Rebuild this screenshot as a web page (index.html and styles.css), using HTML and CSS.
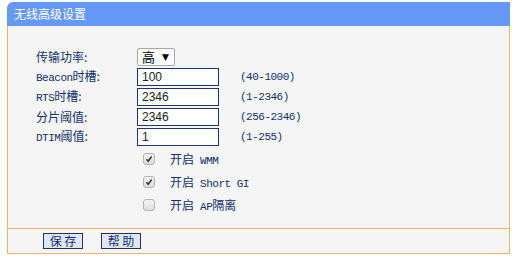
FILE: index.html
```html
<!DOCTYPE html>
<html>
<head>
<meta charset="utf-8">
<link rel="stylesheet" href="styles.css">
</head>
<body>
<div class="panel">
  <div class="title">无线高级设置</div>
  <div class="content">
    <div class="form">
      <div class="label">传输功率:</div>
      <div class="field"><span class="select"><span class="sel-val">高</span><span class="arrow">▼</span></span></div>
      <div class="hint"></div>

      <div class="label"><span class="en">Beacon</span>时槽:</div>
      <div class="field"><span class="input">100</span></div>
      <div class="hint">(40-1000)</div>

      <div class="label"><span class="en">RTS</span>时槽:</div>
      <div class="field"><span class="input">2346</span></div>
      <div class="hint">(1-2346)</div>

      <div class="label">分片阈值:</div>
      <div class="field"><span class="input">2346</span></div>
      <div class="hint">(256-2346)</div>

      <div class="label"><span class="en">DTIM</span>阈值:</div>
      <div class="field"><span class="input">1</span></div>
      <div class="hint">(1-255)</div>
    </div>
    <div class="checks">
      <div class="check-row"><span class="cb checked"><svg viewBox="0 0 12 12" width="12" height="12"><path d="M3 6.2 L5 8.6 L9.2 3" fill="none" stroke="#333" stroke-width="1.8"/></svg></span><span class="cb-label">开启<span class="en"> WMM</span></span></div>
      <div class="check-row"><span class="cb checked"><svg viewBox="0 0 12 12" width="12" height="12"><path d="M3 6.2 L5 8.6 L9.2 3" fill="none" stroke="#333" stroke-width="1.8"/></svg></span><span class="cb-label">开启<span class="en"> Short GI</span></span></div>
      <div class="check-row"><span class="cb"></span><span class="cb-label">开启<span class="en"> AP</span>隔离</span></div>
    </div>
  </div>
  <div class="buttons">
    <span class="btn">保 存</span>
    <span class="btn">帮 助</span>
  </div>
</div>
</body>
</html>
```

FILE: styles.css
```css
html, body {
  margin: 0;
  padding: 0;
  background: #ffffff;
}
body {
  padding: 2px 2px 0 7px;
  font-family: "Noto Sans CJK SC", "Liberation Sans", sans-serif;
  font-size: 12px;
  color: #13306b;
}
.panel {
  width: 503px;
}
.title {
  height: 24px;
  line-height: 24px;
  background: #6699f5;
  color: #ffffff;
  font-size: 12px;
  padding-left: 7px;
  border-top-left-radius: 6px;
}
.content {
  background: #f5f5f5;
  border-left: 1px solid #eeb46e;
  border-right: 1px solid #eeb46e;
  border-bottom: 1px solid #eeb46e;
  padding: 21px 0 12px 28px;
  height: 169px;
}
.form {
  display: grid;
  grid-template-columns: 101px 103px auto;
  grid-auto-rows: 20px;
  align-items: center;
}
.label {
  font-size: 12px;
  line-height: 20px;
  white-space: nowrap;
  color: #13306b;
}
.en {
  font-family: "Liberation Mono", "DejaVu Sans Mono", monospace;
  font-size: 11px;
  letter-spacing: -0.5px;
  white-space: pre;
}
.field {
  display: flex;
  align-items: center;
}
.select {
  display: flex;
  align-items: center;
  box-sizing: border-box;
  width: 38px;
  height: 18px;
  background: #ffffff;
  border: 1px solid #a8a8a8;
  border-radius: 2px;
  color: #000;
  padding-left: 4px;
  font-size: 13px;
}
.sel-val {
  line-height: 16px;
}
.arrow {
  font-size: 9px;
  margin-left: 7px;
  font-family: "DejaVu Sans", sans-serif;
}
.input {
  box-sizing: border-box;
  display: block;
  width: 82px;
  height: 18px;
  border: 1px solid #1c3668;
  background: #ffffff;
  color: #222;
  font-family: "Liberation Sans", Arial, sans-serif;
  font-size: 12px;
  line-height: 16px;
  padding-left: 4px;
}
.hint {
  font-family: "Liberation Mono", "DejaVu Sans Mono", monospace;
  font-size: 11px;
  letter-spacing: -0.5px;
  color: #13306b;
  white-space: nowrap;
}
.checks {
  padding-left: 107px;
}
.check-row {
  height: 23px;
  display: flex;
  align-items: center;
}
.cb {
  box-sizing: border-box;
  width: 12px;
  height: 12px;
  border: 1px solid #b4b4b4;
  border-radius: 3px;
  background: linear-gradient(#f4f4f4, #dcdcdc);
  display: flex;
  align-items: center;
  justify-content: center;
}
.cb svg {
  display: block;
}
.cb-label {
  margin-left: 15px;
  font-size: 12px;
  white-space: nowrap;
}
.buttons {
  background: #f5f5f5;
  border-left: 1px solid #eeb46e;
  border-right: 1px solid #eeb46e;
  border-bottom: 1px solid #eeb46e;
  height: 24px;
  display: flex;
  align-items: center;
  padding-left: 35px;
  gap: 18px;
}
.btn {
  box-sizing: border-box;
  width: 40px;
  height: 16px;
  border: 1px solid #26305e;
  background: #dfe6f6;
  color: #13306b;
  font-size: 12px;
  line-height: 14px;
  text-align: center;
}
```
